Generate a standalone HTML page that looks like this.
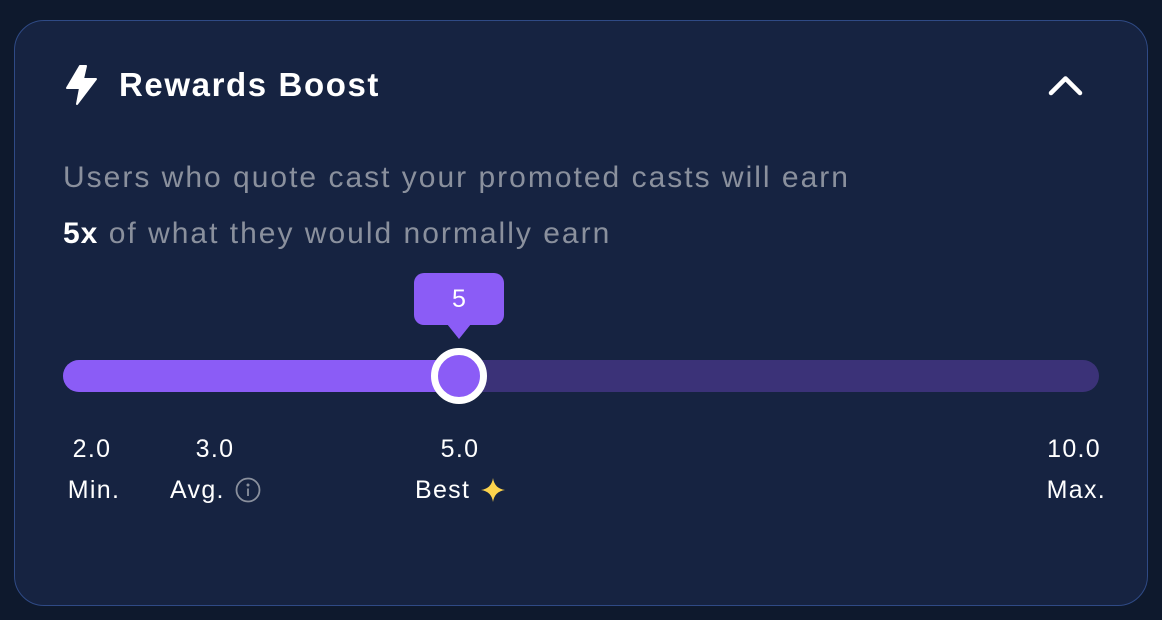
<!DOCTYPE html>
<html><head><meta charset="utf-8"><style>
*{margin:0;padding:0;box-sizing:border-box}
body{width:1162px;height:620px;background:#0e192d;font-family:"Liberation Sans",sans-serif;position:relative;overflow:hidden}
.card{position:absolute;left:14px;top:20px;width:1134px;height:586px;background:#162341;border:1.5px solid #2f4a85;border-radius:30px}
.a{position:absolute;white-space:nowrap}
.l{color:#fff;font-size:25px;letter-spacing:1.3px}
.t{text-align:center;transform:translateX(-50%)}
</style></head><body>
<div class="card"></div>
<svg class="a" style="left:64px;top:64px" width="36" height="42" viewBox="0 0 36 42"><path d="M16 2 L3 24 H16 L13 40 L32 15 H19 L22 2Z" fill="#fff" stroke="#fff" stroke-width="2" stroke-linejoin="round"/></svg>
<div class="a" style="left:119px;top:66px;color:#fff;font-size:33px;font-weight:bold;letter-spacing:1.6px">Rewards Boost</div>
<svg class="a" style="left:1044px;top:70px" width="44" height="30"><path d="M7 23 L21.5 8.5 L36 23" fill="none" stroke="#fff" stroke-width="4.5" stroke-linecap="round" stroke-linejoin="round"/></svg>
<div class="a" style="left:63px;top:161px;color:#8a909d;font-size:30px;letter-spacing:2px">Users who quote cast your promoted casts will earn</div>
<div class="a" style="left:63px;top:217px;color:#8a909d;font-size:30px;letter-spacing:2px"><b style="color:#fff;letter-spacing:1px">5x</b> of what they would normally earn</div>
<div class="a" style="left:414px;top:273px;width:90px;height:52px;background:#8b5cf6;border-radius:10px;color:#fff;font-size:25px;text-align:center;line-height:52px">5</div>
<div class="a" style="left:447px;top:324px;width:0;height:0;border-left:12px solid transparent;border-right:12px solid transparent;border-top:15px solid #8b5cf6"></div>
<div class="a" style="left:63px;top:360px;width:1036px;height:32px;background:#3b3278;border-radius:16px"></div>
<div class="a" style="left:63px;top:360px;width:400px;height:32px;background:#8b5cf6;border-radius:16px 0 0 16px"></div>
<div class="a" style="left:431px;top:348px;width:56px;height:56px;background:#8b5cf6;border:7px solid #fff;border-radius:50%"></div>
<div class="a l t" style="left:92px;top:435px">2.0</div>
<div class="a l t" style="left:94px;top:476px">Min.</div>
<div class="a l t" style="left:215px;top:435px">3.0</div>
<div class="a l" style="left:170px;top:476px">Avg.</div>
<svg class="a" style="left:235px;top:477px" width="28" height="28"><circle cx="13" cy="13" r="11.5" fill="none" stroke="#8a909d" stroke-width="1.8"/><circle cx="13" cy="8" r="1.5" fill="#8a909d"/><path d="M13 11.5 V19" stroke="#8a909d" stroke-width="1.8"/></svg>
<div class="a l t" style="left:460px;top:435px">5.0</div>
<div class="a l" style="left:415px;top:476px">Best</div>
<svg class="a" style="left:479px;top:476px" width="28" height="28"><path d="M14 2 Q15.5 12.5 26 14 Q15.5 15.5 14 26 Q12.5 15.5 2 14 Q12.5 12.5 14 2Z" fill="#fcd34d"/></svg>
<div class="a l" style="right:61px;top:435px">10.0</div>
<div class="a l" style="right:56px;top:476px">Max.</div>
</body></html>
